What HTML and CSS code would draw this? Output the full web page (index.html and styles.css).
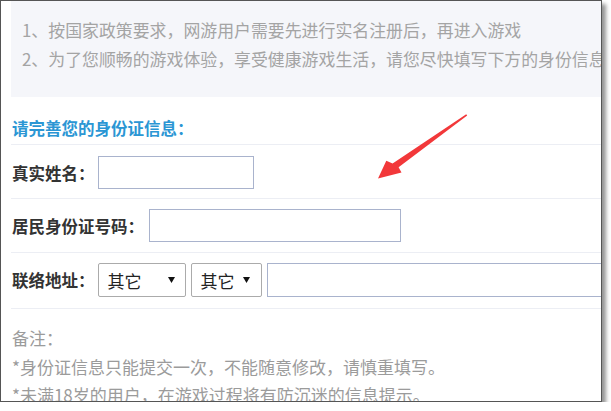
FILE: index.html
```html
<!DOCTYPE html>
<html lang="zh-CN">
<head>
<meta charset="utf-8">
<title>实名认证</title>
<link rel="stylesheet" href="styles.css">
</head>
<body>
<div class="frame">
  <div class="content">
    <div class="notice">
      <p>1、按国家政策要求，网游用户需要先进行实名注册后，再进入游戏</p>
      <p>2、为了您顺畅的游戏体验，享受健康游戏生活，请您尽快填写下方的身份信息。</p>
    </div>
    <h2 class="title">请完善您的身份证信息：</h2>
    <div class="row row-first">
      <label class="label">真实姓名：</label>
      <input class="field field-name" type="text">
    </div>
    <div class="row">
      <label class="label">居民身份证号码：</label>
      <input class="field field-id" type="text">
    </div>
    <div class="row row-addr">
      <label class="label">联络地址：</label>
      <span class="select select-province"><span>其它</span><svg class="caret" width="7" height="6" viewBox="0 0 7 6"><path d="M0 0H7L3.5 6Z" fill="#111"/></svg></span>
      <span class="select select-city"><span>其它</span><svg class="caret" width="7" height="6" viewBox="0 0 7 6"><path d="M0 0H7L3.5 6Z" fill="#111"/></svg></span>
      <input class="field field-addr" type="text">
    </div>
    <div class="remarks">
      <p>备注：</p>
      <p>*身份证信息只能提交一次，不能随意修改，请慎重填写。</p>
      <p>*未满18岁的用户，在游戏过程将有防沉迷的信息提示。</p>
    </div>
  </div>
  <svg class="arrow" width="602" height="402" viewBox="0 0 602 402">
    <polygon points="466.2,114.3 467.2,115.6 398.6,167.2 401.5,172.5 378,178.6 386.3,160.8 392.6,163.6" fill="#f2383a"/>
  </svg>
</div>
</body>
</html>
```

FILE: styles.css
```css
* { box-sizing: border-box; }

body {
  margin: 0;
  background: #ffffff;
  font-family: "Noto Sans CJK SC", "Microsoft YaHei", sans-serif;
}

.frame {
  position: relative;
  width: 602px;
  height: 402px;
  border: 1px solid #555555;
  background: #ffffff;
  box-shadow: 4px 4px 4px rgba(0, 0, 0, 0.42);
  overflow: hidden;
}

.content {
  padding-left: 10px;
}

.notice {
  background: #f5f6fa;
  padding: 14px 0 24px 11px;
  color: #a4a4a4;
  font-size: 16.9px;
  line-height: 29px;
  white-space: nowrap;
}

.notice p { margin: 0; }

.title {
  margin: 0;
  padding: 16px 0 1px 1px;
  font-size: 16.5px;
  line-height: 30px;
  font-weight: bold;
  color: #2b96d4;
  border-bottom: 1px solid #eceef4;
}

.row {
  display: flex;
  align-items: center;
  padding: 10px 0 10px 1px;
  border-bottom: 1px solid #eceef4;
  white-space: nowrap;
}

.row-first {
  padding-top: 11px;
  padding-bottom: 9px;
}

.row-addr {
  padding-bottom: 11px;
}

.label {
  font-size: 16.5px;
  font-weight: bold;
  color: #333333;
  margin-right: 3px;
}

.field {
  flex: none;
  height: 33px;
  border: 1px solid #a9b3cd;
  background: #ffffff;
  padding: 0 6px;
  font: inherit;
  outline: none;
}

.field-name { width: 156px; }
.field-id { width: 252px; margin-left: 2px; }
.field-addr { width: 400px; height: 34px; margin-left: 5px; }

.select {
  flex: none;
  display: flex;
  align-items: center;
  justify-content: space-between;
  height: 34px;
  border: 1px solid #ababab;
  border-radius: 2px;
  padding: 0 10px 0 9px;
  font-size: 17px;
  color: #222222;
  background: #ffffff;
}

.select-province { width: 88px; }
.select-city { width: 71px; margin-left: 5px; padding-right: 11px; }

.caret { display: block; }

.remarks {
  padding: 15px 0 0 1px;
  font-size: 17px;
  line-height: 28.5px;
  color: #9b9b9b;
  white-space: nowrap;
}

.remarks p { margin: 0; }

.arrow {
  position: absolute;
  left: -1px;
  top: -1px;
  pointer-events: none;
}
```
